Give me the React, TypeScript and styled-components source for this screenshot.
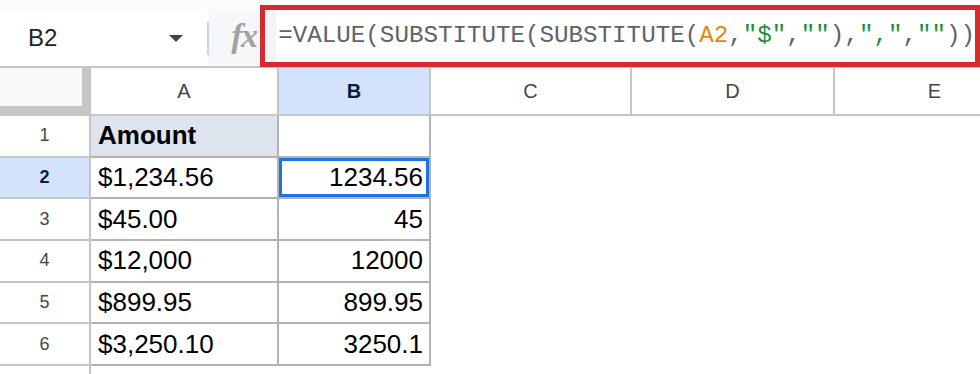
import React from 'react';
import styled, { createGlobalStyle } from 'styled-components';

const GlobalStyle = createGlobalStyle`
  html, body {
    margin: 0;
    padding: 0;
    background: #ffffff;
    overflow: hidden;
  }
  * {
    box-sizing: border-box;
  }
`;

// Formula bar
const Page = styled.div`
  width: 980px;
  height: 374px;
  overflow: hidden;
  font-family: 'Liberation Sans', Arial, sans-serif;
`;

const FormulaBar = styled.div`
  display: flex;
  align-items: flex-start;
  height: 66px;
  padding-top: 5px;
  background: #f9fbfd;
`;

const NameBox = styled.div`
  display: flex;
  align-items: center;
  justify-content: space-between;
  width: 212px;
  height: 56px;
  margin-top: 5px;
  padding: 0 24px 0 28px;
  background: #ffffff;
  color: #1f1f1f;
  font-size: 24px;
`;

const Caret = styled.span`
  width: 0;
  height: 0;
  border-left: 7px solid transparent;
  border-right: 7px solid transparent;
  border-top: 7px solid #444746;
`;

const Divider = styled.div`
  width: 2px;
  height: 33px;
  margin-top: 17px;
  background: #c9d4e2;
`;

const FxSlot = styled.div`
  display: flex;
  align-items: center;
  width: 52px;
  height: 56px;
  margin-top: 5px;
  padding: 0 0 4px 22px;
  background: #f6f7f9;
  color: #a3a3a3;
  font-family: 'Liberation Serif', 'Times New Roman', serif;
  font-style: italic;
  font-weight: bold;
  font-size: 34px;
  letter-spacing: -1.5px;
`;

const FormulaField = styled.div`
  position: relative;
  z-index: 2;
  flex: 1;
  display: flex;
  align-items: center;
  height: 62px;
  padding: 0 0 2px 13px;
  border: 5px solid #d9282e;
  background: #ffffff;
  box-shadow: inset 11px 0 0 #f4f5f7;
  color: #5f6368;
  font-family: 'Liberation Mono', 'DejaVu Sans Mono', monospace;
  font-size: 24.2px;
  white-space: pre;
`;

const Ref = styled.span`
  color: #e8830c;
`;

const Str = styled.span`
  color: #1e8e3e;
`;

// Grid
const COLS = '91px 188px 152px 201px 203px 201px';

const HeaderRow = styled.div`
  display: grid;
  grid-template-columns: ${COLS};
  height: 50px;
  border-top: 2px solid #c4c7c5;
`;

const Corner = styled.div`
  background: #f8f9fa;
  border-right: 9px solid #c4c7c5;
  border-bottom: 10px solid #c4c7c5;
`;

const ColHead = styled.div<{ $active?: boolean }>`
  display: flex;
  align-items: center;
  justify-content: center;
  background: ${(p) => (p.$active ? '#d3e3fd' : '#ffffff')};
  border-right: 2px solid #c4c7c5;
  border-bottom: 2px solid #c4c7c5;
  color: ${(p) => (p.$active ? '#041e49' : '#444746')};
  font-size: 20px;
  font-weight: ${(p) => (p.$active ? 'bold' : 'normal')};
`;

const Row = styled.div`
  display: grid;
  grid-template-columns: ${COLS};
  height: 41.7px;
`;

const RowHead = styled.div<{ $active?: boolean; $open?: boolean }>`
  display: flex;
  align-items: center;
  justify-content: center;
  background: ${(p) => (p.$active ? '#d3e3fd' : '#ffffff')};
  border-right: 2px solid #c4c7c5;
  border-bottom: ${(p) => (p.$open ? 'none' : '2px solid #c4c7c5')};
  color: ${(p) => (p.$active ? '#041e49' : '#444746')};
  font-size: 18px;
  font-weight: ${(p) => (p.$active ? 'bold' : 'normal')};
`;

const Cell = styled.div<{
  $right?: boolean;
  $bold?: boolean;
  $fill?: string;
  $selected?: boolean;
}>`
  display: flex;
  align-items: center;
  justify-content: ${(p) => (p.$right ? 'flex-end' : 'flex-start')};
  padding: 0 6px 0 7px;
  background: ${(p) => p.$fill || '#ffffff'};
  border-right: 2px solid #b3b3b3;
  border-bottom: 2px solid #b3b3b3;
  box-shadow: ${(p) => (p.$selected ? 'inset 0 0 0 3px #1a73e8' : 'none')};
  color: #000000;
  font-size: 26px;
  font-weight: ${(p) => (p.$bold ? 'bold' : 'normal')};
`;

const Blank = styled.div`
  background: #ffffff;
`;

const rows = [
  { n: 1, a: 'Amount', b: '' },
  { n: 2, a: '$1,234.56', b: '1234.56' },
  { n: 3, a: '$45.00', b: '45' },
  { n: 4, a: '$12,000', b: '12000' },
  { n: 5, a: '$899.95', b: '899.95' },
  { n: 6, a: '$3,250.10', b: '3250.1' },
];

const App: React.FC = () => {
  return (
    <Page>
      <GlobalStyle />
      <FormulaBar>
        <NameBox>
          <span>B2</span>
          <Caret />
        </NameBox>
        <Divider />
        <FxSlot>fx</FxSlot>
        <FormulaField>
          =VALUE(SUBSTITUTE(SUBSTITUTE(<Ref>A2</Ref>,<Str>"$"</Str>,<Str>""</Str>),<Str>","</Str>,<Str>""</Str>))
        </FormulaField>
      </FormulaBar>

      <HeaderRow>
        <Corner />
        <ColHead>A</ColHead>
        <ColHead $active>B</ColHead>
        <ColHead>C</ColHead>
        <ColHead>D</ColHead>
        <ColHead>E</ColHead>
      </HeaderRow>

      {rows.map((r) => (
        <Row key={r.n}>
          <RowHead $active={r.n === 2}>{r.n}</RowHead>
          <Cell $bold={r.n === 1} $fill={r.n === 1 ? '#dde4ee' : undefined}>
            {r.a}
          </Cell>
          <Cell $right $selected={r.n === 2}>
            {r.b}
          </Cell>
          <Blank />
          <Blank />
          <Blank />
        </Row>
      ))}

      <Row>
        <RowHead $open />
        <Blank />
        <Blank />
        <Blank />
        <Blank />
        <Blank />
      </Row>
    </Page>
  );
};

export default App;
